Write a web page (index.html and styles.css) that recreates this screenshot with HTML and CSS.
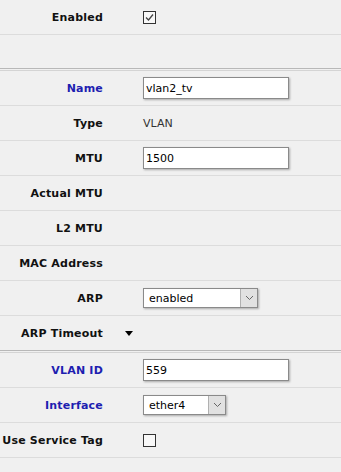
FILE: index.html
```html
<!DOCTYPE html>
<html lang="en">
<head>
    <meta charset="UTF-8">
    <meta name="viewport" content="width=device-width, initial-scale=1.0">
    <title>Interface &lt;vlan2_tv&gt;</title>
    <link rel="stylesheet" href="styles.css">
</head>
<body>

    <div class="form">
        <div class="row">
            <div class="label">Enabled</div>
            <div class="toggle"></div>
            <div class="value">
                <span class="check">
                    <svg width="11" height="11" viewBox="0 0 11 11"><path d="M2 5.5 L4.5 8 L9 2.5" fill="none" stroke="#444" stroke-width="1.3"/></svg>
                </span>
            </div>
        </div>
        <div class="row blank"></div>
        <div class="sep"></div>

        <div class="row">
            <div class="label req">Name</div>
            <div class="toggle"></div>
            <div class="value"><input class="text" type="text" value="vlan2_tv"></div>
        </div>
        <div class="row">
            <div class="label">Type</div>
            <div class="toggle"></div>
            <div class="value plain">VLAN</div>
        </div>
        <div class="row">
            <div class="label">MTU</div>
            <div class="toggle"></div>
            <div class="value"><input class="text" type="text" value="1500"></div>
        </div>
        <div class="row">
            <div class="label">Actual MTU</div>
            <div class="toggle"></div>
            <div class="value"></div>
        </div>
        <div class="row">
            <div class="label">L2 MTU</div>
            <div class="toggle"></div>
            <div class="value"></div>
        </div>
        <div class="row">
            <div class="label">MAC Address</div>
            <div class="toggle"></div>
            <div class="value"></div>
        </div>
        <div class="row">
            <div class="label">ARP</div>
            <div class="toggle"></div>
            <div class="value">
                <div class="select wide">
                    <span class="sel-text">enabled</span>
                    <span class="sel-btn"><svg width="9" height="6" viewBox="0 0 9 6"><path d="M1 1 L4.5 4.5 L8 1" fill="none" stroke="#666" stroke-width="1"/></svg></span>
                </div>
            </div>
        </div>
        <div class="row last">
            <div class="label">ARP Timeout</div>
            <div class="toggle"><span class="tri"></span></div>
            <div class="value"></div>
        </div>
        <div class="sep"></div>

        <div class="row">
            <div class="label req">VLAN ID</div>
            <div class="toggle"></div>
            <div class="value"><input class="text" type="text" value="559"></div>
        </div>
        <div class="row">
            <div class="label req">Interface</div>
            <div class="toggle"></div>
            <div class="value">
                <div class="select narrow">
                    <span class="sel-text">ether4</span>
                    <span class="sel-btn"><svg width="9" height="6" viewBox="0 0 9 6"><path d="M1 1 L4.5 4.5 L8 1" fill="none" stroke="#666" stroke-width="1"/></svg></span>
                </div>
            </div>
        </div>
        <div class="row">
            <div class="label">Use Service Tag</div>
            <div class="toggle"></div>
            <div class="value"><span class="check"></span></div>
        </div>
    </div>

</body>
</html>
```

FILE: styles.css
```css
/* page */
* {
    margin: 0;
    padding: 0;
    box-sizing: border-box;
}

body {
    background: #f0f0f0;
    font-family: "DejaVu Sans", Verdana, sans-serif;
    font-size: 11px;
    color: #000;
    overflow: hidden;
}

.form {
    width: 341px;
}

/* rows */
.row {
    display: grid;
    grid-template-columns: 103px 40px 1fr;
    align-items: center;
    height: 35px;
    border-bottom: 1px solid #dcdcdc;
}

.row.last {
    border-bottom: none;
    height: 34px;
}

.row.blank {
    height: 33px;
    border-bottom: none;
}

.sep {
    height: 3px;
    border-top: 1px solid #b8b8b8;
    border-bottom: 1px solid #d4d4d4;
}

.label {
    display: flex;
    justify-content: flex-end;
    white-space: nowrap;
    font-weight: bold;
    color: #111;
    letter-spacing: 0.2px;
}

.label.req {
    color: #1e1eb0;
}

.toggle {
    display: flex;
    align-items: center;
    padding-left: 22px;
}

.tri {
    width: 0;
    height: 0;
    border-left: 4px solid transparent;
    border-right: 4px solid transparent;
    border-top: 5px solid #000;
}

.value {
    display: flex;
    align-items: center;
}

.value.plain {
    color: #333;
}

/* controls */
.text {
    width: 146px;
    height: 22px;
    padding: 0 2px;
    border: 1px solid #8a8a8a;
    background: #fff;
    font-family: "DejaVu Sans", Verdana, sans-serif;
    font-size: 11px;
    color: #000;
    box-shadow: 1px 1px 2px rgba(0, 0, 0, 0.3);
    outline: none;
}

.select {
    display: flex;
    height: 20px;
    border: 1px solid #8a8a8a;
    background: #fff;
    box-shadow: 1px 1px 2px rgba(0, 0, 0, 0.3);
}

.select.wide {
    width: 115px;
}

.select.narrow {
    width: 83px;
}

.sel-text {
    flex: 1;
    display: flex;
    align-items: center;
    padding-left: 5px;
}

.sel-btn {
    width: 17px;
    display: flex;
    align-items: center;
    justify-content: center;
    background: #e1e1e1;
    border-left: 1px solid #b0b0b0;
}

.check {
    width: 13px;
    height: 13px;
    border: 1px solid #333;
    background: #f8f8f8;
    display: flex;
    align-items: center;
    justify-content: center;
}
```
